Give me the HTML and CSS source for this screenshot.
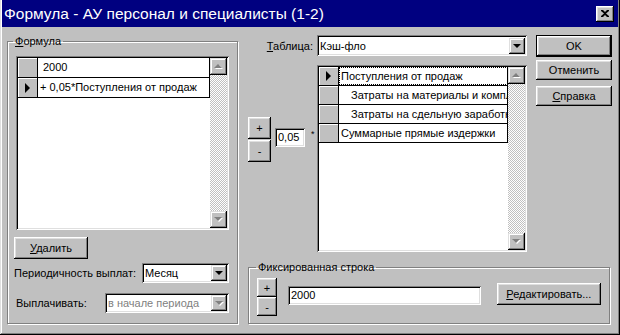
FILE: index.html
```html
<!DOCTYPE html>
<html>
<head>
    <title>Формула</title>
    <link rel="stylesheet" href="styles.css">
</head>
<body>
    <div class="window">
        <div class="titlebar">
            <span class="title">Формула - АУ персонал и специалисты (1-2)</span>
            <button class="close">
                <svg width="8" height="7" viewBox="0 0 8 7"><path d="M0 0h2l2 2 2-2h2v1L5 3.5 8 6v1H6L4 5 2 7H0V6l3-2.5L0 1z" fill="#000"/></svg>
            </button>
        </div>

        <div class="content">
            <!-- left: formula lines -->
            <fieldset class="group group-formula">
                <legend><u>Ф</u>ормула</legend>
                <div class="grid grid-formula">
                    <div class="rows">
                        <div class="row"><span class="ind"></span><span class="cell indent-s">2000</span></div>
                        <div class="row"><span class="ind"><i class="pointer"></i></span><span class="cell">+ 0,05*Поступления от продаж</span></div>
                    </div>
                    <div class="vscroll">
                        <span class="sbtn up"></span>
                        <span class="track"></span>
                        <span class="sbtn down"></span>
                    </div>
                </div>
                <button class="btn btn-delete"><u>У</u>далить</button>
                <div class="field field-period">
                    <span class="label">Периодичность выплат:</span>
                    <div class="combo combo-period"><span class="combo-text">Месяц</span><span class="drop"></span></div>
                </div>
                <div class="field field-pay">
                    <span class="label">Выплачивать:</span>
                    <div class="combo combo-pay disabled"><span class="combo-text">в начале периода</span><span class="drop"></span></div>
                </div>
            </fieldset>

            <!-- right: table picker, rows, fixed row -->
            <div class="right">
                <span class="label table-label"><u>Т</u>аблица:</span>
                <div class="combo combo-table"><span class="combo-text">Кэш-фло</span><span class="drop"></span></div>

                <div class="actions">
                    <button class="btn btn-ok">OK</button>
                    <button class="btn">Отменить</button>
                    <button class="btn"><u>С</u>правка</button>
                </div>

                <div class="pm pm-coef">
                    <button class="btn">+</button>
                    <button class="btn">-</button>
                </div>
                <div class="coef">
                    <span class="edit edit-coef">0,05</span>
                    <span class="times">*</span>
                </div>

                <div class="grid grid-table">
                    <div class="rows">
                        <div class="row"><span class="ind"><i class="pointer"></i></span><span class="cell focused">Поступления от продаж</span></div>
                        <div class="row"><span class="ind"></span><span class="cell indent">Затраты на материалы и комплектующие</span></div>
                        <div class="row"><span class="ind"></span><span class="cell indent">Затраты на сдельную заработную плату</span></div>
                        <div class="row"><span class="ind"></span><span class="cell">Суммарные прямые издержки</span></div>
                    </div>
                    <div class="vscroll">
                        <span class="sbtn up"></span>
                        <span class="track"></span>
                        <span class="sbtn down"></span>
                    </div>
                </div>

                <fieldset class="group group-fixed">
                    <legend>Фиксированная строка</legend>
                    <div class="pm pm-fixed">
                        <button class="btn">+</button>
                        <button class="btn">-</button>
                    </div>
                    <span class="edit edit-fixed">2000</span>
                    <button class="btn btn-edit"><u>Р</u>едактировать...</button>
                </fieldset>
            </div>
        </div>
    </div>
</body>
</html>
```

FILE: styles.css
```css
body {
    margin: 0;
    font-family: "Liberation Sans", Arial, sans-serif;
    font-size: 11px;
    color: #000;
}
.window {
    width: 620px;
    height: 335px;
    box-sizing: border-box;
    background: #c0c0c0;
    padding: 0 3px 3px 2px;
    box-shadow: inset -1px -1px #000, inset 1px 0 #dfdfdf, inset -2px -2px #808080, inset 2px 0 #fff;
}
.titlebar {
    height: 27px;
    margin: 0 -1px 0 0;
    background: #000080;
    color: #fff;
    display: flex;
    align-items: center;
    justify-content: space-between;
    padding: 0 4px 0 2px;
}
.title {
    font-size: 15.5px;
    padding-top: 1px;
}
.close {
    width: 18px;
    height: 16px;
    padding: 0;
    border: none;
    display: flex;
    align-items: center;
    justify-content: center;
    background: #c0c0c0;
    box-shadow: inset -1px -1px #000, inset 1px 1px #fff, inset -2px -2px #808080, inset 2px 2px #dfdfdf;
}

.content {
    display: flex;
    gap: 10px;
    padding: 7px 0 0 5px;
}
.label {
    white-space: nowrap;
}

/* group boxes */
.group {
    margin: 0;
    border: 1px solid #808080;
    box-shadow: 1px 1px 0 #fff, inset 1px 1px 0 #fff;
    min-inline-size: 0;
}
.group legend {
    padding: 0 2px;
    margin-left: -3px;
    line-height: 14px;
}
.group-formula {
    width: 231px;
    height: 290px;
    box-sizing: border-box;
    padding: 8px 8px 0 8px;
}

/* raised / sunken */
.btn {
    font: inherit;
    color: #000;
    border: none;
    padding: 0;
    background: #c0c0c0;
    box-shadow: inset -1px -1px #000, inset 1px 1px #fff, inset -2px -2px #808080, inset 2px 2px #dfdfdf;
}
u {
    text-decoration-thickness: 1px;
}
.btn-delete {
    display: block;
    width: 74px;
    height: 22px;
    margin: 7px 0 0 -2px;
}

/* data grids */
.grid {
    display: flex;
    background: #fff;
    padding: 2px;
    box-shadow: inset 1px 1px #808080, inset -1px -1px #fff, inset 2px 2px #000, inset -2px -2px #dfdfdf;
    box-sizing: border-box;
}
.grid-formula {
    width: 213px;
    height: 174px;
}
.rows {
    flex: 1;
    min-width: 0;
}
.row {
    display: flex;
    height: 20px;
    box-sizing: border-box;
    border-bottom: 1px solid #000;
}
.grid-table .row {
    height: 19px;
}
.ind {
    width: 19px;
    flex: none;
    background: #c0c0c0;
    border-right: 1px solid #000;
    box-shadow: inset 1px 1px #fff;
    display: flex;
    align-items: center;
    justify-content: center;
}
.pointer {
    width: 0;
    height: 0;
    border-left: 5px solid #000;
    border-top: 5px solid transparent;
    border-bottom: 5px solid transparent;
}
.cell {
    flex: 1;
    min-width: 0;
    padding: 0 2px;
    line-height: 19px;
    white-space: nowrap;
    overflow: hidden;
    border-right: 1px solid #000;
}
.grid-table .cell {
    line-height: 18px;
}
.indent-s {
    padding-left: 5px;
}
.cell.indent {
    padding-left: 12px;
}
.cell.focused {
    outline: 1px dotted #000;
    outline-offset: -1px;
}
.vscroll {
    width: 17px;
    flex: none;
    display: flex;
    flex-direction: column;
}
.track {
    flex: 1;
    background: repeating-conic-gradient(#fff 0 25%, #c0c0c0 0 50%) 0 0 / 2px 2px;
}
.sbtn {
    height: 17px;
    background: #c0c0c0;
    box-shadow: inset -1px -1px #000, inset 1px 1px #dfdfdf, inset -2px -2px #808080, inset 2px 2px #fff;
    position: relative;
}
.sbtn::before, .sbtn::after {
    content: "";
    position: absolute;
    left: 5px;
    width: 0;
    height: 0;
    border-left: 4px solid transparent;
    border-right: 4px solid transparent;
}
.sbtn.up::before { top: 7px; left: 5px; border-bottom: 4px solid #fff; }
.sbtn.up::after { top: 6px; left: 4px; border-bottom: 4px solid #808080; }
.sbtn.down::before { top: 7px; left: 5px; border-top: 4px solid #fff; }
.sbtn.down::after { top: 6px; left: 4px; border-top: 4px solid #808080; }

/* combos and fields */
.field {
    display: flex;
    align-items: center;
    justify-content: space-between;
    width: 213px;
}
.field-period {
    margin-top: 4px;
}
.field-period .label {
    margin-left: -2px;
}
.field-pay {
    margin-top: 10px;
}
.combo {
    height: 20px;
    box-sizing: border-box;
    background: #fff;
    padding: 2px;
    display: flex;
    align-items: center;
    box-shadow: inset 1px 1px #808080, inset -1px -1px #fff, inset 2px 2px #000, inset -2px -2px #dfdfdf;
}
.combo-text {
    flex: 1;
    padding-left: 1px;
    white-space: nowrap;
    overflow: hidden;
}
.drop {
    width: 16px;
    height: 16px;
    flex: none;
    background: #c0c0c0;
    box-shadow: inset -1px -1px #000, inset 1px 1px #dfdfdf, inset -2px -2px #808080, inset 2px 2px #fff;
    position: relative;
}
.drop::after {
    content: "";
    position: absolute;
    left: 4px;
    top: 6px;
    border-left: 4px solid transparent;
    border-right: 4px solid transparent;
    border-top: 4px solid #000;
}
.combo-period {
    width: 87px;
}
.combo-pay {
    width: 124px;
}
.combo.disabled .combo-text {
    color: #808080;
}
.combo.disabled .drop::after {
    border-top-color: #808080;
}
.combo.disabled .drop::before {
    content: "";
    position: absolute;
    left: 5px;
    top: 7px;
    border-left: 4px solid transparent;
    border-right: 4px solid transparent;
    border-top: 4px solid #fff;
}

/* right side */
.right {
    display: grid;
    grid-template-columns: 23px 46px 210px 9px 76px;
    grid-template-rows: 22px auto auto;
    margin-top: 1px;
    align-items: start;
}
.table-label {
    grid-column: 1 / 3;
    grid-row: 1;
    justify-self: end;
    align-self: center;
    margin-right: 4px;
}
.combo-table {
    grid-column: 3;
    grid-row: 1;
    height: 21px;
}
.actions {
    grid-column: 5;
    grid-row: 1 / 3;
    display: flex;
    flex-direction: column;
}
.actions .btn {
    height: 20px;
    margin-top: 5px;
}
.actions .btn-ok {
    height: 22px;
    margin-top: 0;
    border: 1px solid #000;
    margin-bottom: -2px;
}
.actions .btn:last-child {
    margin-top: 6px;
}
.pm {
    display: flex;
    flex-direction: column;
}
.pm-coef {
    grid-column: 1;
    grid-row: 2;
    margin-top: 60px;
    gap: 1px;
}
.pm-coef .btn {
    height: 22px;
}
.coef {
    grid-column: 2;
    grid-row: 2;
    margin: 71px 0 0 4px;
    display: flex;
}
.edit {
    background: #fff;
    box-sizing: border-box;
    padding: 2px 3px;
    line-height: 15px;
    white-space: nowrap;
    box-shadow: inset 1px 1px #808080, inset -1px -1px #fff, inset 2px 2px #000, inset -2px -2px #dfdfdf;
}
.edit-coef {
    width: 30px;
    height: 19px;
}
.times {
    font-size: 9px;
    margin: 1px 0 0 6px;
}
.grid-table {
    grid-column: 3;
    grid-row: 2;
    margin-top: 8px;
    height: 187px;
}
.group-fixed {
    grid-column: 1 / 6;
    grid-row: 3;
    width: 362px;
    height: 64px;
    box-sizing: border-box;
    margin-top: 8px;
    padding: 4px 8px 0 8px;
    display: flex;
    align-items: flex-start;
}
.group-fixed legend {
    margin-left: -1px;
}
.pm-fixed .btn {
    width: 20px;
    height: 19px;
}
.edit-fixed {
    width: 194px;
    height: 19px;
    margin: 8px 0 0 11px;
}
.btn-edit {
    width: 105px;
    height: 22px;
    margin: 5px 0 0 16px;
}
```
